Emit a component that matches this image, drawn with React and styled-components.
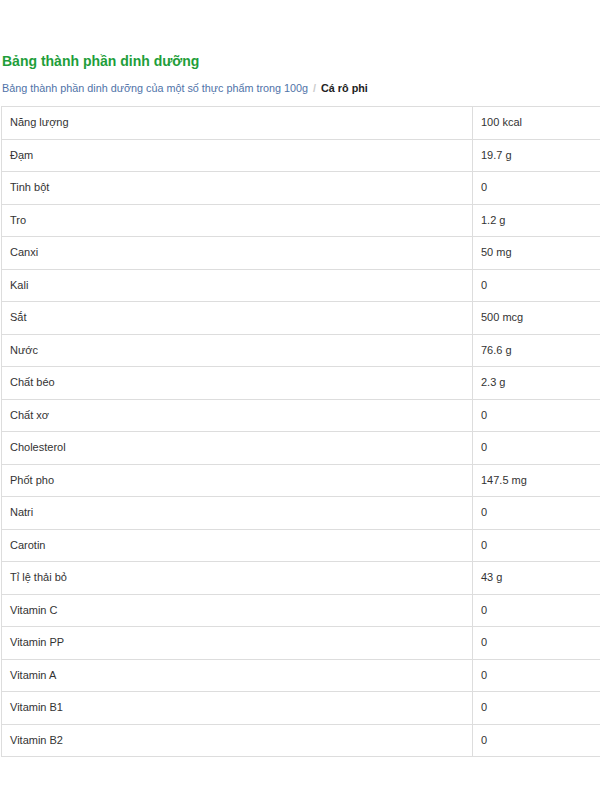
import React from "react"
import styled, { createGlobalStyle } from "styled-components"

const GlobalStyle = createGlobalStyle`
  html, body {
    margin: 0;
    padding: 0;
    background: #fff;
  }
  body {
    font-family: "Liberation Sans", Arial, sans-serif;
    color: #333;
  }
`

const Page = styled.div`
  padding: 51px 0 0 1px;
`

const Title = styled.h2`
  margin: 0 0 0 1px;
  font-size: 14px;
  font-weight: bold;
  line-height: 20px;
  color: #1e9e3a;
`

const Breadcrumb = styled.ol`
  list-style: none;
  margin: 9px 0 0 0;
  padding: 0 0 0 1px;
  display: flex;
  align-items: center;
  font-size: 10.8px;
  line-height: 17px;
  li + li::before {
    content: "/";
    color: #ccc;
    padding: 0 5px;
  }
`

const Crumb = styled.li`
  color: ${p => (p.active ? "#222" : "#4f73a8")};
  font-weight: ${p => (p.active ? "bold" : "normal")};
`

const Table = styled.table`
  margin-top: 9px;
  width: 100%;
  border-collapse: collapse;
  border: 1px solid #ddd;
  border-right: none;
  font-size: 11px;
  color: #333;
`

const Cell = styled.td`
  padding: 8px;
  line-height: 15.5px;
  border-top: 1px solid #ddd;
  border-left: 1px solid #ddd;
  vertical-align: top;
  width: ${p => p.w || "auto"};
`

const rows = [
  ["Năng lượng", "100 kcal"],
  ["Đạm", "19.7 g"],
  ["Tinh bột", "0"],
  ["Tro", "1.2 g"],
  ["Canxi", "50 mg"],
  ["Kali", "0"],
  ["Sắt", "500 mcg"],
  ["Nước", "76.6 g"],
  ["Chất béo", "2.3 g"],
  ["Chất xơ", "0"],
  ["Cholesterol", "0"],
  ["Phốt pho", "147.5 mg"],
  ["Natri", "0"],
  ["Carotin", "0"],
  ["Tỉ lệ thải bỏ", "43 g"],
  ["Vitamin C", "0"],
  ["Vitamin PP", "0"],
  ["Vitamin A", "0"],
  ["Vitamin B1", "0"],
  ["Vitamin B2", "0"],
]

export default function App() {
  return (
    <>
      <GlobalStyle />
      <Page>
        <Title>Bảng thành phần dinh dưỡng</Title>
        <Breadcrumb>
          <Crumb>Bảng thành phần dinh dưỡng của một số thực phẩm trong 100g</Crumb>
          <Crumb active>Cá rô phi</Crumb>
        </Breadcrumb>
        <Table>
          <tbody>
            {rows.map(([name, value]) => (
              <tr key={name}>
                <Cell w="454px">{name}</Cell>
                <Cell>{value}</Cell>
              </tr>
            ))}
          </tbody>
        </Table>
      </Page>
    </>
  )
}
